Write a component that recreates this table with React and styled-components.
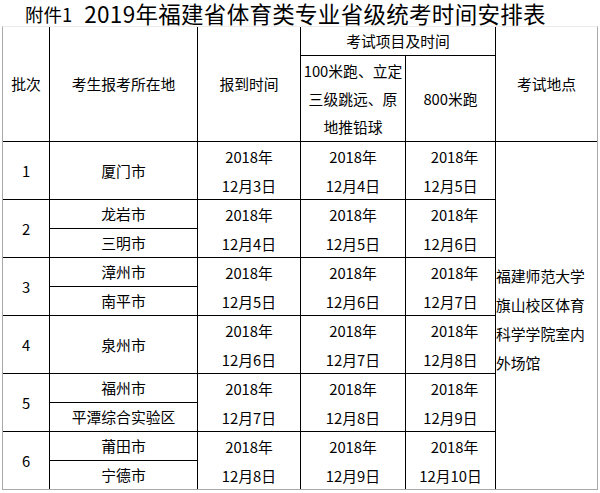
import React from "react";
import styled, { createGlobalStyle } from "styled-components";

const Global = createGlobalStyle`
  html, body { margin: 0; padding: 0; background: #fff; }
  body { font-family: "Noto Sans CJK SC", "Noto Sans", sans-serif; color: #000; }
`;

const Page = styled.div`
  width: 600px;
  height: 493px;
  overflow: hidden;
  background: #fff;
`;

const Title = styled.div`
  height: 26px;
  display: flex;
  align-items: center;
  padding-left: 25px;
  gap: 12px;
  white-space: nowrap;
`;

const Annex = styled.span`
  font-size: 18.5px;
  line-height: 24px;
  padding-top: 1px;
`;

const Heading = styled.span`
  font-size: 22.5px;
  line-height: 26px;
  letter-spacing: 0.3px;
`;

const Sheet = styled.div`
  margin-left: 2px;
  width: 594px;
  display: grid;
  grid-template-columns: 46px 147px 102px 104px 89px 101px;
  grid-template-rows: 28px 85px repeat(12, 28px);
  gap: 1px;
  background: #000;
  border-left: 1px solid #a9a9a9;
  border-right: 1px solid #a9a9a9;
  border-bottom: 1px solid #a9a9a9;
  border-top: 1px solid #ececec;
`;

const Cell = styled.div`
  background: #fff;
  grid-column: ${(p) => p.$col} / span ${(p) => p.$cspan || 1};
  grid-row: ${(p) => p.$row} / span ${(p) => p.$rspan || 1};
  display: flex;
  flex-direction: column;
  align-items: center;
  justify-content: center;
  font-size: 14.8px;
  line-height: ${(p) => p.$lh || 28}px;
  white-space: nowrap;
`;

const Venue = styled.div`
  background: #fff;
  grid-column: 6;
  grid-row: 3 / span 12;
  display: flex;
  align-items: center;
  font-size: 14.8px;
  line-height: 29px;
  padding-top: 6px;
  box-sizing: border-box;
`;

const VenueText = styled.div`
  width: 100%;
  word-break: break-all;
`;

const Line = styled.span`
  display: block;
  padding-left: ${(p) => p.$indent || 0}px;
`;

const batches = [
  { no: "1", cities: ["厦门市"], days: [3, 4, 5] },
  { no: "2", cities: ["龙岩市", "三明市"], days: [4, 5, 6] },
  { no: "3", cities: ["漳州市", "南平市"], days: [5, 6, 7] },
  { no: "4", cities: ["泉州市"], days: [6, 7, 8] },
  { no: "5", cities: ["福州市", "平潭综合实验区"], days: [7, 8, 9] },
  { no: "6", cities: ["莆田市", "宁德市"], days: [8, 9, 10] },
];

function DateCell({ col, row, day, indent }) {
  return (
    <Cell $col={col} $row={row} $rspan={2} $lh={29}>
      <Line $indent={indent}>2018年</Line>
      <Line>12月{day}日</Line>
    </Cell>
  );
}

export default function App() {
  return (
    <Page>
      <Global />
      <Title>
        <Annex>附件1</Annex>
        <Heading>2019年福建省体育类专业省级统考时间安排表</Heading>
      </Title>
      <Sheet>
        <Cell $col={1} $row={1} $rspan={2}>批次</Cell>
        <Cell $col={2} $row={1} $rspan={2}>考生报考所在地</Cell>
        <Cell $col={3} $row={1} $rspan={2}>报到时间</Cell>
        <Cell $col={4} $row={1} $cspan={2}>考试项目及时间</Cell>
        <Cell $col={4} $row={2}>
          <Line>100米跑、立定</Line>
          <Line>三级跳远、原</Line>
          <Line>地推铅球</Line>
        </Cell>
        <Cell $col={5} $row={2}>800米跑</Cell>
        <Cell $col={6} $row={1} $rspan={2}>考试地点</Cell>

        {batches.map((b, i) => {
          const row = 3 + i * 2;
          return (
            <React.Fragment key={b.no}>
              <Cell $col={1} $row={row} $rspan={2}>{b.no}</Cell>
              {b.cities.length === 1 ? (
                <Cell $col={2} $row={row} $rspan={2}>{b.cities[0]}</Cell>
              ) : (
                b.cities.map((c, j) => (
                  <Cell key={c} $col={2} $row={row + j}>{c}</Cell>
                ))
              )}
              <DateCell col={3} row={row} day={b.days[0]} />
              <DateCell col={4} row={row} day={b.days[1]} />
              <DateCell col={5} row={row} day={b.days[2]} indent={8} />
            </React.Fragment>
          );
        })}

        <Venue>
          <VenueText>福建师范大学旗山校区体育科学学院室内外场馆</VenueText>
        </Venue>
      </Sheet>
    </Page>
  );
}
